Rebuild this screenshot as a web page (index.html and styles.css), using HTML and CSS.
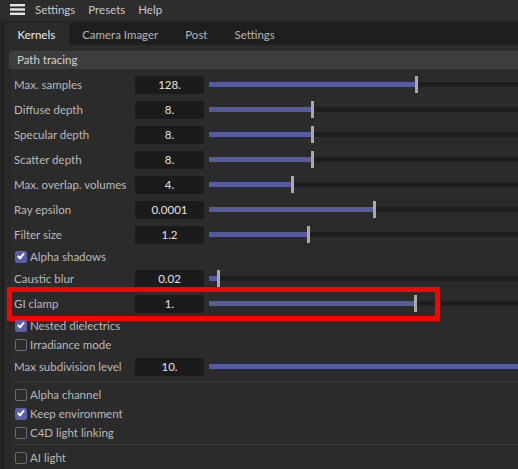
FILE: index.html
```html
<!DOCTYPE html>
<html lang="en">
  <head>
    <meta charset="UTF-8" />
    <title>Kernels</title>
    <link rel="stylesheet" href="styles.css">
  </head>
  <body>
    <div class="menubar">
      <svg class="burger" width="15" height="11" viewBox="0 0 15 11">
        <rect x="0" y="0" width="15" height="2.4" fill="#e6e6e6" />
        <rect x="0" y="4.3" width="15" height="2.4" fill="#e6e6e6" />
        <rect x="0" y="8.6" width="15" height="2.4" fill="#e6e6e6" />
      </svg>
      <span class="menu">Settings</span>
      <span class="menu">Presets</span>
      <span class="menu">Help</span>
    </div>

    <div class="frame">
      <div class="gutter"></div>
      <div class="panel">
        <div class="tabs">
          <div class="tab active">Kernels</div>
          <div class="tab">Camera Imager</div>
          <div class="tab">Post</div>
          <div class="tab">Settings</div>
        </div>

        <div class="content">
          <div class="group-head">Path tracing</div>
          <div class="group">
            <div class="row">
              <span class="label">Max. samples</span>
              <span class="field">128.</span>
              <div class="slider"><div class="fill" style="width: 207px"></div><div class="knob"></div></div>
            </div>
            <div class="row">
              <span class="label">Diffuse depth</span>
              <span class="field">8.</span>
              <div class="slider"><div class="fill" style="width: 103px"></div><div class="knob"></div></div>
            </div>
            <div class="row">
              <span class="label">Specular depth</span>
              <span class="field">8.</span>
              <div class="slider"><div class="fill" style="width: 103px"></div><div class="knob"></div></div>
            </div>
            <div class="row">
              <span class="label">Scatter depth</span>
              <span class="field">8.</span>
              <div class="slider"><div class="fill" style="width: 103px"></div><div class="knob"></div></div>
            </div>
            <div class="row">
              <span class="label">Max. overlap. volumes</span>
              <span class="field">4.</span>
              <div class="slider"><div class="fill" style="width: 83px"></div><div class="knob"></div></div>
            </div>
            <div class="row">
              <span class="label">Ray epsilon</span>
              <span class="field">0.0001</span>
              <div class="slider"><div class="fill" style="width: 165px"></div><div class="knob"></div></div>
            </div>
            <div class="row">
              <span class="label">Filter size</span>
              <span class="field">1.2</span>
              <div class="slider"><div class="fill" style="width: 99px"></div><div class="knob"></div></div>
            </div>
            <label class="check on"><span class="box"></span>Alpha shadows</label>
            <div class="row">
              <span class="label">Caustic blur</span>
              <span class="field">0.02</span>
              <div class="slider"><div class="fill" style="width: 9px"></div><div class="knob"></div></div>
            </div>
            <div class="row highlight">
              <span class="label">GI clamp</span>
              <span class="field">1.</span>
              <div class="slider"><div class="fill" style="width: 206px"></div><div class="knob"></div></div>
            </div>
            <label class="check on"><span class="box"></span>Nested dielectrics</label>
            <label class="check"><span class="box"></span>Irradiance mode</label>
            <div class="row">
              <span class="label">Max subdivision level</span>
              <span class="field">10.</span>
              <div class="slider"><div class="fill full"></div></div>
            </div>
            <div class="sep"></div>
            <label class="check"><span class="box"></span>Alpha channel</label>
            <label class="check on"><span class="box"></span>Keep environment</label>
            <label class="check"><span class="box"></span>C4D light linking</label>
            <div class="sep"></div>
            <label class="check"><span class="box"></span>AI light</label>
          </div>
        </div>
      </div>
    </div>
  </body>
</html>
```

FILE: styles.css
```css
*,
*::before,
*::after {
  margin: 0;
  padding: 0;
  box-sizing: border-box;
}
body {
  width: 518px;
  height: 469px;
  overflow: hidden;
  background-color: #2b2b2b;
  color: #bababa;
  font-family: Lato, "Noto Sans", sans-serif;
  font-size: 11.5px;
}
.menubar {
  height: 23px;
  display: flex;
  align-items: center;
  padding: 0 0 2px 10px;
  background-color: #2d2d2d;
  border-bottom: 2px solid #232323;
}
.burger {
  margin-right: 10px;
}
.menu {
  color: #c8c8c8;
  margin-right: 13px;
}
.frame {
  display: flex;
  height: 446px;
}
.gutter {
  width: 4px;
  flex: none;
  background-color: #232323;
  border-right: 1px solid #1a1a1a;
}
.panel {
  flex: 1;
  min-width: 0;
  overflow: hidden;
}
.tabs {
  display: flex;
  height: 22px;
  background-color: #1e1e1e;
}
.tab {
  padding: 0 13.5px;
  line-height: 23px;
  color: #b4b4b4;
}
.tab.active {
  background-color: #2b2b2b;
  color: #ececec;
}
.content {
  padding: 6px 0 0 5px;
}
.group-head {
  height: 18px;
  line-height: 18px;
  padding-left: 8px;
  background-color: #3d3d3d;
  border-radius: 3px 0 0 0;
  color: #d2d2d2;
}
.group {
  border-left: 1px solid #222;
  padding: 3px 0 0 4px;
}
.row {
  display: flex;
  align-items: center;
  height: 25px;
  position: relative;
}
.label {
  width: 121px;
  flex: none;
  white-space: nowrap;
}
.field {
  width: 69px;
  height: 18px;
  flex: none;
  line-height: 18px;
  text-align: center;
  background-color: #1b1b1b;
  border-radius: 3px;
  color: #e2e2e2;
}
.slider {
  display: flex;
  align-items: center;
  flex: 1;
  height: 5px;
  margin-left: 5px;
  background-color: #1e1e1e;
}
.fill {
  height: 5px;
  flex: none;
  background-color: #565ba0;
}
.fill.full {
  flex: 1;
}
.knob {
  width: 3px;
  height: 17px;
  flex: none;
  margin-left: -1px;
  background-color: #a9a9a9;
}
.check {
  display: flex;
  align-items: center;
  height: 19px;
  padding-left: 1px;
}
.check .box {
  width: 12px;
  height: 12px;
  margin-right: 3px;
  border: 1.5px solid #6c6c6c;
  border-radius: 2px;
  position: relative;
}
.check.on .box {
  background-color: #5b5ea8;
  border-color: #5b5ea8;
}
.check.on .box::after {
  content: "";
  position: absolute;
  left: 2.5px;
  top: 0;
  width: 4px;
  height: 7px;
  border: solid #fff;
  border-width: 0 2px 2px 0;
  transform: rotate(40deg);
}
.sep {
  height: 1px;
  margin: 2px 0 3px;
  background-color: #3a3a3a;
}
.highlight::before {
  content: "";
  position: absolute;
  left: -7px;
  top: -4px;
  width: 433px;
  height: 34px;
  border: 5px solid #ff0000;
  pointer-events: none;
}
```
